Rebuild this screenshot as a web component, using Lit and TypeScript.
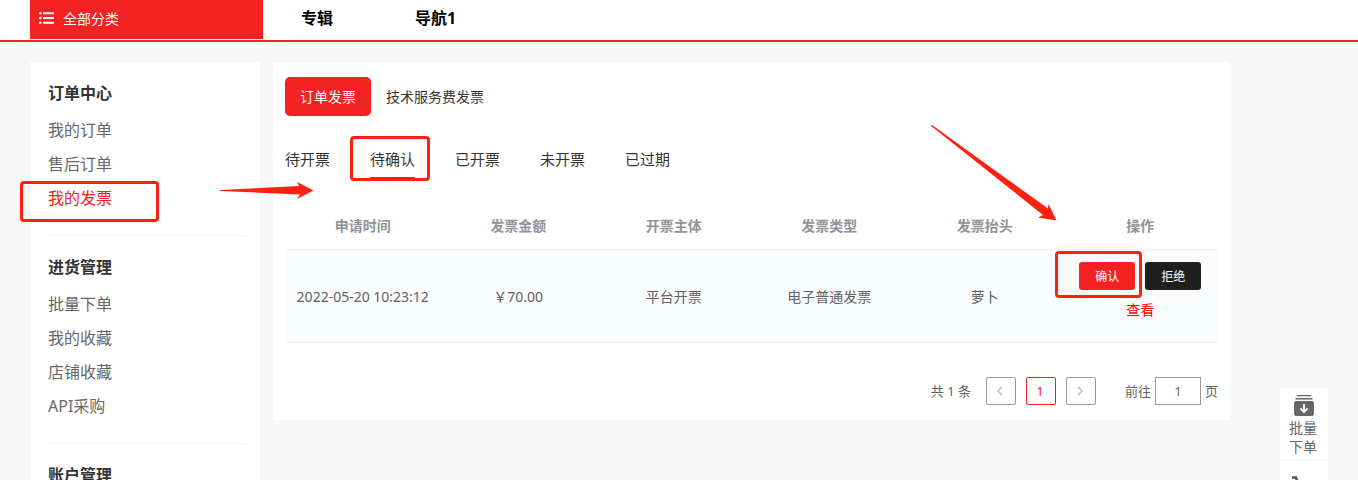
import { LitElement, html, css, svg } from "lit";
import { customElement, state } from "lit/decorators.js";

interface MenuGroup {
  title: string;
  items: string[];
}

const MENU: MenuGroup[] = [
  { title: "订单中心", items: ["我的订单", "售后订单", "我的发票"] },
  { title: "进货管理", items: ["批量下单", "我的收藏", "店铺收藏", "API采购"] },
  { title: "账户管理", items: [] },
];

const FONT = css`"Noto Sans", "Noto Sans CJK SC", sans-serif`;

@customElement("site-header")
class SiteHeader extends LitElement {
  static styles = css`
    :host { display: block; font-family: ${FONT}; }
    .bar {
      display: flex; align-items: flex-start; background: #fff;
      border-bottom: 2px solid #f42222; padding: 0 30px; height: 40px;
    }
    .all {
      display: flex; align-items: center; gap: 9px; width: 233px; height: 39px;
      box-sizing: border-box; padding: 0 9px 3px; background: #f42222; color: #fff;
      font-size: 14px; text-decoration: none;
    }
    .links { display: flex; gap: 82px; padding-left: 38px; }
    .link { color: #000; font-size: 16px; font-weight: 700; line-height: 36px; text-decoration: none; }
  `;
  render() {
    return html`<header class="bar">
      <a class="all" href="#">
        <svg width="15" height="12" viewBox="0 0 15 12" fill="#fff">
          <circle cx="1.3" cy="1.300" r="1.300" /><circle cx="1.3" cy="6" r="1.300" /><circle cx="1.3" cy="10.700" r="1.300" />
          <path d="M4 .3h11v2H4zM4 5h11v2H4zM4 9.700h11v2H4z" />
        </svg>
        <span>全部分类</span>
      </a>
      <nav class="links">
        <a class="link" href="#">专辑</a>
        <a class="link" href="#">导航1</a>
      </nav>
    </header>`;
  }
}

@customElement("side-menu")
class SideMenu extends LitElement {
  static styles = css`
    :host { display: block; background: #fff; font-family: ${FONT}; padding: 0 13px 0 18px; box-sizing: border-box; }
    .group { padding: 14px 0 20px; border-bottom: 1px solid #f5f5f5; }
    .title { margin: 0 0 3px; font-size: 16px; line-height: 34px; font-weight: 700; color: #333; }
    .list { list-style: none; margin: 0; padding: 0; }
    .item { display: block; font-size: 16px; line-height: 34px; color: #666; text-decoration: none; }
    .item.on { color: #f42222; }
  `;
  render() {
    return html`<nav>
      ${MENU.map(
        (g) => html`<section class="group">
          <h2 class="title">${g.title}</h2>
          <ul class="list">
            ${g.items.map((t) => html`<li><a class="item ${t === "我的发票" ? "on" : ""}" href="#">${t}</a></li>`)}
          </ul>
        </section>`
      )}
    </nav>`;
  }
}

@customElement("invoice-panel")
class InvoicePanel extends LitElement {
  @state() kind = 0;
  @state() status = 1;

  static styles = css`
    :host { display: block; background: #fff; font-family: ${FONT}; padding: 15px 12px; box-sizing: border-box; }
    button, input { font-family: inherit; margin: 0; cursor: pointer; }
    .kinds { display: flex; }
    .kind {
      border: 0; background: none; height: 39px; padding: 0 15px 2px; border-radius: 5px;
      font-size: 14px; color: #333;
    }
    .kind.on { background: #f42222; color: #fff; }
    .states { display: flex; gap: 40px; margin-top: 24px; }
    .state {
      border: 0; border-bottom: 2px solid transparent; background: none; padding: 0;
      height: 39px; font-size: 15px; color: #333;
    }
    .state.on { border-bottom-color: #f42222; }
    .table { width: 100%; table-layout: fixed; border-collapse: collapse; margin-top: 24px; font-size: 14px; }
    .table th, .table td { padding: 0; text-align: center; border-bottom: 1px solid #ebeef5; }
    .table th { height: 44px; padding-bottom: 2px; color: #909399; font-weight: 700; }
    .table td { height: 92px; color: #606266; background: #fafbfd; }
    .table .actions { height: 84px; padding-bottom: 8px; }
    .ops { display: flex; justify-content: center; gap: 10px; }
    .op { width: 56px; height: 28px; padding: 0; border: 0; border-radius: 3px; font-size: 12px; color: #fff; background: #f42222; }
    .op.dark { background: #1f1f1f; }
    .view { display: block; margin-top: 8px; line-height: 24px; color: #f00; text-decoration: none; }
    .pager { display: flex; justify-content: flex-end; align-items: center; margin-top: 34px; font-size: 13px; line-height: 28px; color: #606266; }
    .pages { display: flex; gap: 10px; margin: 0 29px 0 15px; }
    .page {
      display: flex; align-items: center; justify-content: center; width: 30px; height: 28px; padding: 0 2px 0 0;
      box-sizing: border-box; border: 1px solid #999; border-radius: 2px; background: #fff; font-size: 13px;
    }
    .page.on { border-color: #f42222; color: #f42222; }
    .jump { display: flex; gap: 4px; }
    .num {
      width: 46px; height: 28px; box-sizing: border-box; border: 1px solid #999; padding: 0;
      text-align: center; font-size: 13px; color: #606266; background: #fff;
    }
  `;

  render() {
    return html`
      <div class="kinds">
        ${["订单发票", "技术服务费发票"].map(
          (t, i) => html`<button class="kind ${i === this.kind ? "on" : ""}" @click=${() => (this.kind = i)}>${t}</button>`
        )}
      </div>
      <div class="states">
        ${["待开票", "待确认", "已开票", "未开票", "已过期"].map(
          (t, i) => html`<button class="state ${i === this.status ? "on" : ""}" @click=${() => (this.status = i)}>${t}</button>`
        )}
      </div>
      <table class="table">
        <thead>
          <tr>${["申请时间", "发票金额", "开票主体", "发票类型", "发票抬头", "操作"].map((t) => html`<th>${t}</th>`)}</tr>
        </thead>
        <tbody>
          <tr>
            ${["2022-05-20 10:23:12", "￥70.00", "平台开票", "电子普通发票", "萝卜"].map((t) => html`<td>${t}</td>`)}
            <td class="actions">
              <div class="ops"><button class="op">确认</button><button class="op dark">拒绝</button></div>
              <a class="view" href="#">查看</a>
            </td>
          </tr>
        </tbody>
      </table>
      <div class="pager">
        <span>共 1 条</span>
        <div class="pages">
          <button class="page" aria-label="上一页">
            <svg width="8" height="10" viewBox="0 0 8 10" fill="none" stroke="#c0c4cc" stroke-width="1.8"><path d="M6 .8 2 5l4 4.2" /></svg>
          </button>
          <button class="page on">1</button>
          <button class="page" aria-label="下一页">
            <svg width="8" height="10" viewBox="0 0 8 10" fill="none" stroke="#c0c4cc" stroke-width="1.8"><path d="M2 .8 6 5 2 9.2" /></svg>
          </button>
        </div>
        <label class="jump"><span>前往</span><input class="num" value="1" aria-label="页码" /><span>页</span></label>
      </div>
    `;
  }
}

@customElement("quick-bar")
class QuickBar extends LitElement {
  static styles = css`
    :host { display: flex; flex-direction: column; gap: 1px; width: 48px; font-family: ${FONT}; }
    .tool {
      display: flex; flex-direction: column; align-items: center; gap: 1px; height: 72px; box-sizing: border-box;
      padding: 7px 9px 0; background: #fff; color: #666; font-size: 14px; line-height: 19px; text-decoration: none;
    }
    .cart { padding-top: 14px; }
  `;
  render() {
    return html`
      <a class="tool" href="#">
        <svg width="22" height="22" viewBox="0 0 22 22" fill="#666">
          <path d="M4 0h14v1.300H4zM2.500 3h17v1.400h-17z" />
          <path d="M3.500 6h15A2.500 2.500 0 0 1 21 8.500V18.500A2.500 2.500 0 0 1 18.500 21h-15A2.500 2.500 0 0 1 1 18.500V8.500A2.500 2.500 0 0 1 3.500 6z" />
          <path d="M11 9v8M7.500 13.500 11 17l3.500-3.500" fill="none" stroke="#fff" stroke-width="1.8" />
        </svg>
        <span>批量下单</span>
      </a>
      <a class="tool cart" href="#" aria-label="购物车">
        <svg width="26" height="22" viewBox="0 0 26 22" fill="none" stroke="#555" stroke-width="2.500">
          <path d="M1 2.500h4l4 12h11l3-8H7" /><circle cx="10" cy="19" r="1" /><circle cx="19" cy="19" r="1" />
        </svg>
      </a>
    `;
  }
}

const frame = (x: number, y: number, w: number, h: number) =>
  svg`<rect x=${x} y=${y} width=${w} height=${h} rx="2.500" fill="none" stroke="#ff2010" stroke-width="3" />`;

@customElement("app-root")
class AppRoot extends LitElement {
  static styles = css`
    :host { display: block; position: relative; height: 100vh; overflow: hidden; background: #f7f7f7; }
    .body { display: flex; align-items: flex-start; gap: 13px; max-width: 1200px; margin: 20px 128px 0 30px; }
    .side { flex: 0 0 230px; }
    .main { flex: 1; min-width: 0; }
    .quick { position: absolute; right: 30px; top: 388px; }
    .marks { position: absolute; left: 0; top: 0; pointer-events: none; }
  `;
  render() {
    return html`
      <site-header></site-header>
      <div class="body">
        <side-menu class="side"></side-menu>
        <invoice-panel class="main"></invoice-panel>
      </div>
      <quick-bar class="quick"></quick-bar>
      <svg class="marks" width="1358" height="480" viewBox="0 0 1358 480" aria-hidden="true">
        ${frame(21.5, 182.5, 136, 38)} ${frame(351.5, 137.5, 77, 42)} ${frame(1056.5, 252.5, 84, 44)}
        <path fill="#ff2010" d="M220 190 299 186 297 182 313.500 190.500 297 199 300 194.500 220 191z" />
        <path fill="#ff2010" d="M930.500 125.500 932 125 1048 208.500 1048.500 204 1056.500 220.500 1038 217.500 1043 215z" />
      </svg>
    `;
  }
}
